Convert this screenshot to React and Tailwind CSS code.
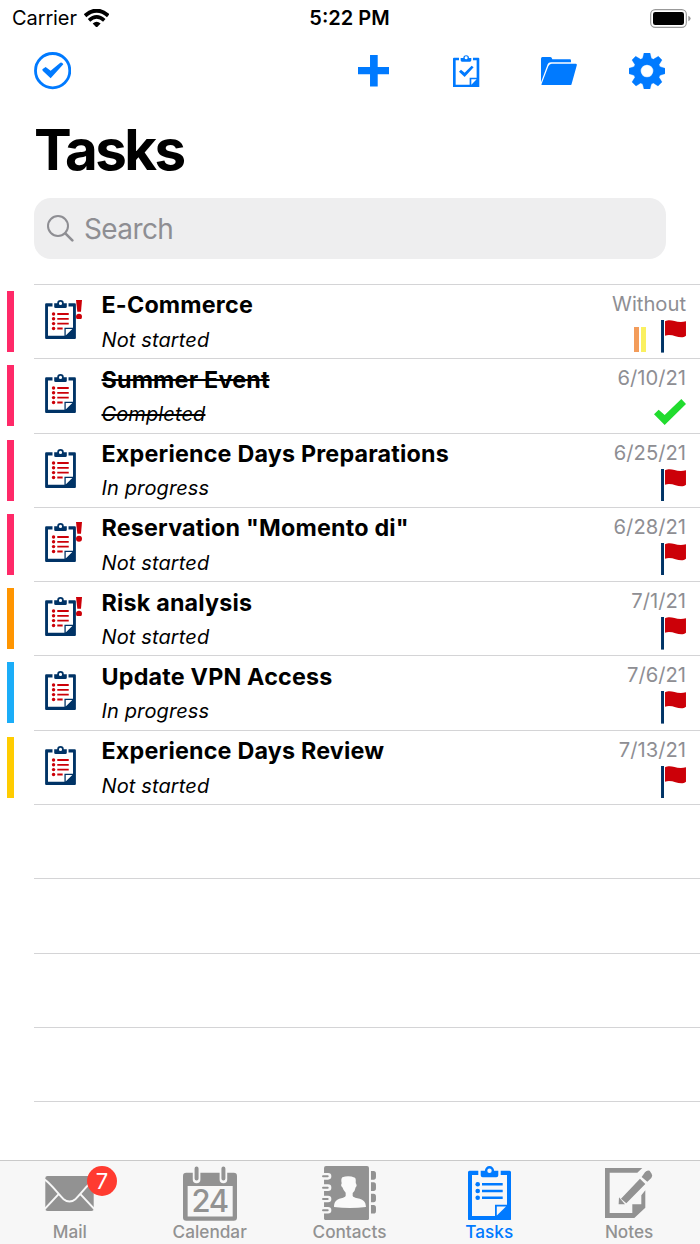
import { clsx } from 'clsx';

const tasks = [
  { title: 'E-Commerce', status: 'Not started', date: 'Without', bar: 'bg-[#ff2968]', urgent: true, tags: true },
  { title: 'Summer Event', status: 'Completed', date: '6/10/21', bar: 'bg-[#ff2968]', done: true },
  { title: 'Experience Days Preparations', status: 'In progress', date: '6/25/21', bar: 'bg-[#ff2968]' },
  { title: 'Reservation "Momento di"', status: 'Not started', date: '6/28/21', bar: 'bg-[#ff2968]', urgent: true },
  { title: 'Risk analysis', status: 'Not started', date: '7/1/21', bar: 'bg-[#ff9500]', urgent: true },
  { title: 'Update VPN Access', status: 'In progress', date: '7/6/21', bar: 'bg-[#1badf8]' },
  { title: 'Experience Days Review', status: 'Not started', date: '7/13/21', bar: 'bg-[#ffcc00]' },
];

const emptyRows = [0, 1, 2, 3, 4];

// Board outline with clip and folded corner, contents go in as children
const Clipboard = ({ className, children }) => (
  <svg viewBox="0 0 43 54.5" className={className} fill="currentColor">
    <path d="M1.5 4.7H10.3V9H4V50H27V38.7H39V9H32.7V4.7H41.5Q43 4.7 43 6.2V53Q43 54.5 41.5 54.5H1.5Q0 54.5 0 53V6.2Q0 4.7 1.5 4.7Z M28.8 40.5V49.5L38 40.5Z" fillRule="evenodd" />
    <path d="M12.7 4.7H16.9A4.6 4.6 0 0 1 26.1 4.7H30.3V9.3Q30.3 11.3 28.3 11.3H14.7Q12.7 11.3 12.7 9.3Z M23.7 4.8A2.2 2.2 0 1 0 19.3 4.8A2.2 2.2 0 1 0 23.7 4.8Z" fillRule="evenodd" />
    {children}
  </svg>
);

const TaskIcon = ({ urgent }) => (
  <div className="relative w-[31px]">
    <Clipboard className="w-[31px] h-[39px] text-[#003366]">
      <g fill="#cc0008">
        <circle cx="11.8" cy="19.6" r="2.4" />
        <circle cx="11.8" cy="26.3" r="2.4" />
        <circle cx="11.8" cy="33" r="2.4" />
        <circle cx="11.8" cy="39.8" r="2.4" />
        <path d="M17 18.3H33V20.9H17Z M17 25H33V27.6H17Z M17 31.7H33V34.3H17Z M17 38.5H24.5V41.1H17Z" />
      </g>
    </Clipboard>
    {urgent && (
      <svg viewBox="0 0 18 59" className="absolute left-[31.5px] -top-[0.5px] w-[6px] h-[19.7px]" fill="#cc0008">
        <path d="M0 0H18L15 35H4Z" />
        <circle cx="9" cy="50" r="9" />
      </svg>
    )}
  </div>
);

const Flag = () => (
  <svg viewBox="0 0 75 98" className="w-[25px] h-[32.6px]">
    <path d="M0 0H9V98H0Z" fill="#003366" />
    <path d="M12 4C32 -6 43 11 75 4V47C58 62 36 38 12 47Z" fill="#cc0008" />
  </svg>
);

const TaskRow = ({ task }) => (
  <div className="flex h-[74.3px] pl-[7px]">
    <div className={clsx('mt-[7px] mr-5 h-[61px] w-[7px]', task.bar)} />
    <div className="flex flex-1 border-t border-[#d4d4d6] pr-[14px] pl-[10.5px]">
      <div className="pt-[15px]">
        <TaskIcon urgent={task.urgent} />
      </div>
      <div className="ml-[26px] flex-1 whitespace-nowrap">
        <div className={clsx('mt-[5.4px] text-[23.3px] leading-[30px] font-bold tracking-[0.2px]', task.done && 'line-through decoration-2')}>
          {task.title}
        </div>
        <div className={clsx('mt-[5.4px] text-[20px] leading-[28px] tracking-[0.12px] italic', task.done && 'line-through decoration-[1.5px]')}>
          {task.status}
        </div>
      </div>
      <div className="flex flex-col items-end">
        <div className="mt-[5px] text-[20.2px] leading-[28px] text-[#8e8e93]">{task.date}</div>
        {task.done ? (
          <svg viewBox="0 0 96 78" className="mt-[6.5px] mr-[0.3px] h-[26px] w-8" fill="#21dc2e">
            <path d="M0 46L14 32L32 48L82 0L96 15L32 78Z" />
          </svg>
        ) : (
          <div className="mt-[2px] mr-[0.3px] flex items-end">
            {task.tags && (
              <div className="mr-[15px] mb-[1px] flex gap-[2px]">
                <span className="h-[25px] w-[5px] bg-[#f39c5a]" />
                <span className="h-[25px] w-[5px] bg-[#faf060]" />
              </div>
            )}
            <Flag />
          </div>
        )}
      </div>
    </div>
  </div>
);

const StatusBar = () => (
  <div className="grid h-9 shrink-0 grid-cols-3 items-center pr-[9px] pl-3">
    <div className="flex items-center">
      <span className="text-[20px] leading-6 tracking-[-0.1px]">Carrier</span>
      <svg viewBox="0 0 76 56" className="ml-[7px] h-[18.6px] w-[25.3px]">
        <path d="M3 20Q38 -10 73 20" fill="none" stroke="#000" strokeWidth="12" />
        <path d="M15 34Q38 14 61 34" fill="none" stroke="#000" strokeWidth="11" />
        <path d="M26 44Q38 33 50 44L38 56Z" />
      </svg>
    </div>
    <div className="pr-1 text-center text-[20px] leading-6 font-semibold">5:22 PM</div>
    <svg viewBox="0 0 123 57" className="h-[19px] w-[41px] justify-self-end">
      <rect x="2" y="2" width="107" height="53" rx="14" fill="none" stroke="#999" strokeWidth="3.5" />
      <rect x="9" y="9" width="93" height="39" rx="7" />
      <path d="M115 20Q122 23 122 28.5Q122 34 115 37Z" fill="#999" />
    </svg>
  </div>
);

const Toolbar = () => (
  <div className="flex h-[70px] shrink-0 items-center pr-[35px] pl-[34px] text-[#007aff]">
    <svg viewBox="0 0 112 112" className="h-[37.3px] w-[37.3px]" fill="currentColor">
      <circle cx="56" cy="56" r="51.5" fill="none" stroke="currentColor" strokeWidth="8.5" />
      <path d="M25 52L35 45L50 56L79 32Q82 30 85 33L88 37L50 79L26 56Z" />
    </svg>
    <svg viewBox="0 0 94 94" className="ml-auto h-[31.4px] w-[31.4px]" fill="currentColor">
      <path d="M36 0H59V36H94V58H59V94H36V58H0V36H36Z" />
    </svg>
    <svg viewBox="0 0 79 98" className="ml-16 h-[32.7px] w-[26.3px]" fill="currentColor">
      <path d="M3 8H18V16H8V89H50V68H71V16H60V8H76Q79 8 79 11V95Q79 98 76 98H3Q0 98 0 95V11Q0 8 3 8Z M55 73V89L71 73Z" fillRule="evenodd" />
      <path d="M23 9H31A8.5 8.5 0 0 1 48 9H55V16Q55 20 51 20H27Q23 20 23 16Z M44 8.5A4.5 4.5 0 1 0 35 8.5A4.5 4.5 0 1 0 44 8.5Z" fillRule="evenodd" />
      <path d="M18 50L24 44L35 53L56 32L62 37L35 66Z" />
    </svg>
    <svg viewBox="0 0 108 86" className="ml-[61.5px] h-[28.7px] w-9" fill="currentColor">
      <path d="M0 5Q0 0 4 0H28Q32 0 34 7H87Q90 7 90 11V16H30Q22 16 20 22L0 76Z" />
      <path d="M32 20H104Q109 20 107 26L92 80Q91 86 85 86H6Q0 86 2 80L22 28Q25 20 32 20Z" />
    </svg>
    <svg viewBox="-54 -54 108 108" className="ml-[52px] h-9 w-9" fill="currentColor">
      <path d="M-9 -54H9L13 -38L19 -35L34 -44L45 -33L36 -19L39 -13L54 -8V8L39 13L36 19L45 33L33 45L19 36L13 39L9 54H-9L-13 39L-19 36L-33 45L-45 33L-36 19L-39 13L-54 8V-8L-39 -13L-36 -19L-45 -33L-34 -44L-19 -35L-13 -38Z M19 0A19 19 0 1 0 -19 0A19 19 0 1 0 19 0Z" fillRule="evenodd" stroke="currentColor" strokeWidth="1" strokeLinejoin="round" />
    </svg>
  </div>
);

const MailIcon = () => (
  <div className="relative mt-[14.5px] h-[35px] w-[49px]">
    <svg viewBox="0 0 148 107" className="h-[35px] w-[49px]">
      <rect width="148" height="107" rx="7" fill="#929292" />
      <path d="M-3 10C18 25 35 49 55 70Q74 86 93 70C113 49 130 25 151 10M-2 101L40 56M150 101L108 56" fill="none" stroke="#f7f7f7" strokeWidth="6" />
    </svg>
    <span className="absolute -top-[10px] left-[41.5px] flex h-[30px] w-[30px] items-center justify-center rounded-full bg-[#ff3b30] text-[22px] leading-none text-white">
      7
    </span>
  </div>
);

const CalendarIcon = () => (
  <div className="relative mt-[4.5px] h-[55px] w-[54px]">
    <svg viewBox="0 0 163 165" className="h-[55px] w-[54px]" fill="#929292">
      <path d="M10 20H153Q163 20 163 30V155Q163 165 153 165H10Q0 165 0 155V30Q0 20 10 20Z M14 60V152H150V60Z" fillRule="evenodd" />
      <path d="M41 40V5M122 40V5" stroke="#f7f7f7" strokeWidth="23" strokeLinecap="round" />
      <path d="M41 37V7M122 37V7" stroke="#929292" strokeWidth="12" strokeLinecap="round" />
    </svg>
    <span className="absolute top-[19.5px] left-0 w-full text-center text-[31px] leading-[31px] font-medium tracking-[-1.2px] text-[#929292]">24</span>
  </div>
);

const ContactsIcon = () => (
  <svg viewBox="0 0 162 164" className="mt-[4.5px] h-[54.6px] w-[54px]" fill="#929292">
    <rect x="6" width="135" height="163" rx="6" />
    <path d="M147 15H155Q162 15 162 23V33Q162 41 155 41H147Z M147 49H155Q162 49 162 57V67Q162 75 155 75H147Z M147 83H155Q162 83 162 91V101Q162 109 155 109H147Z M147 117H155Q162 117 162 125V135Q162 143 155 143H147Z" />
    <path d="M0 31H18M0 65H18M0 99H18M0 133H18" stroke="#f7f7f7" strokeWidth="20" strokeLinecap="round" />
    <path d="M3 31H17M3 65H17M3 99H17M3 133H17" stroke="#929292" strokeWidth="6" strokeLinecap="round" />
    <path d="M61 34Q79 27 99 35C104 42 99 49 103 54Q106 61 101 64Q99 76 92 81V89C96 101 132 90 132 123Q84 130 36 123C37 90 66 101 71 89V80Q64 73 61 64Q55 60 59 52Q56 39 61 34Z" fill="#fafafa" />
  </svg>
);

const TasksIcon = () => (
  <Clipboard className="mt-[4.5px] h-[54.5px] w-[43px]">
    <circle cx="9.7" cy="18.3" r="2.3" />
    <circle cx="9.7" cy="25" r="2.3" />
    <circle cx="9.7" cy="31.7" r="2.3" />
    <path d="M14 17H34.7V19.6H14Z M14 23.7H34.7V26.3H14Z M14 30.4H34.7V33H14Z" />
  </Clipboard>
);

const NotesIcon = () => (
  <svg viewBox="0 0 142 150" className="mt-[6.5px] h-[50px] w-[47.3px]" fill="#929292">
    <path d="M0 0H112L97 14H14V135H82V109H109V82L121 67V119L88 150H0Z" />
    <path d="M48 92L105 32L121 48L64 106Z M42 88L60 109H41Z M110 27L120 13Q126 5 134 8L140 17Q144 22 139 30L127 41Z" />
  </svg>
);

const tabs = [
  { label: 'Mail', Icon: MailIcon },
  { label: 'Calendar', Icon: CalendarIcon },
  { label: 'Contacts', Icon: ContactsIcon },
  { label: 'Tasks', Icon: TasksIcon, active: true },
  { label: 'Notes', Icon: NotesIcon },
];

const TabBar = () => (
  <nav className="grid h-[84px] shrink-0 grid-cols-5 border-t border-[#cacaca] bg-[#f7f7f7] pr-[1px]">
    {tabs.map(({ label, Icon, active }) => (
      <div key={label} className={clsx('flex flex-col items-center', active ? 'text-[#007aff]' : 'text-[#929292]')}>
        <div className="h-[60.5px]">
          <Icon />
        </div>
        <span className="text-[17.2px] leading-[20px] font-medium">{label}</span>
      </div>
    ))}
  </nav>
);

const App = () => {
  return (
    <div className="flex h-[1244px] w-[700px] flex-col overflow-hidden bg-white font-['Inter','Liberation_Sans',sans-serif] text-black">
      <StatusBar />
      <Toolbar />

      <h1 className="mt-[9px] ml-[34px] h-[70px] shrink-0 text-[56.5px] leading-[70px] font-bold tracking-[-2.6px]">Tasks</h1>

      {/* Search */}
      <div className="mx-[34px] mt-[13px] flex h-[61px] shrink-0 items-center rounded-[17px] bg-[#eeeeef] pl-[13px] text-[#8e8e93]">
        <svg viewBox="0 0 81 81" className="h-[27px] w-[27px]" fill="none" stroke="currentColor">
          <circle cx="33" cy="33" r="30" strokeWidth="6" />
          <path d="M55 55L76 76" strokeWidth="8" strokeLinecap="round" />
        </svg>
        <span className="ml-[10px] text-[28px] tracking-[-0.6px]">Search</span>
      </div>

      {/* Task list, last empty row runs under the tab bar */}
      <main className="mt-[25px] min-h-0 flex-1 overflow-hidden">
        {tasks.map((task) => (
          <TaskRow key={task.title} task={task} />
        ))}
        {emptyRows.map((row) => (
          <div key={row} className="ml-[34px] h-[74.3px] border-t border-[#d4d4d6]" />
        ))}
      </main>

      <TabBar />
    </div>
  );
};

export default App;
